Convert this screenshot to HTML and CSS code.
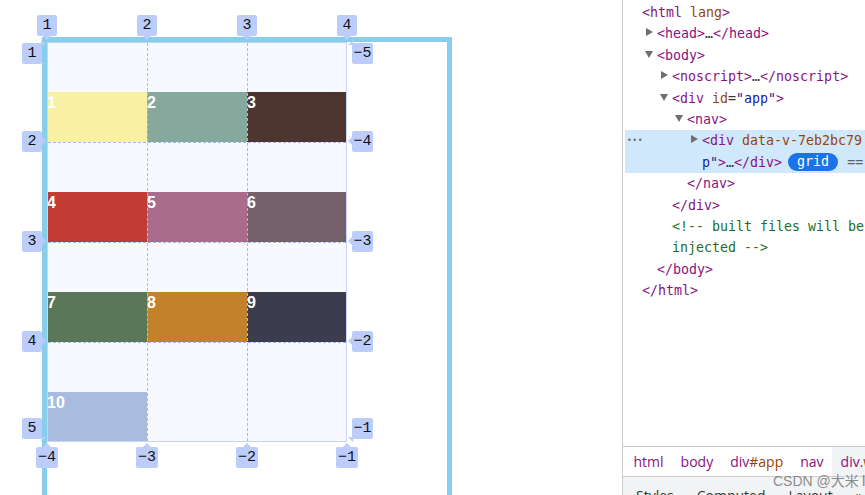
FILE: index.html
```html
<!DOCTYPE html>
<html lang="en">
<head>
<meta charset="utf-8">
<title>Grid</title>
<link rel="stylesheet" href="styles.css">
</head>
<body>
<main class="preview">
  <div class="frame">
    <div class="grid">
      <div class="item" style="background:#f8f1a3">1</div>
      <div class="item" style="background:#87a89c">2</div>
      <div class="item" style="background:#4f352f">3</div>
      <div class="item" style="background:#c23b35">4</div>
      <div class="item" style="background:#aa6c8c">5</div>
      <div class="item" style="background:#74616a">6</div>
      <div class="item" style="background:#5a7858">7</div>
      <div class="item" style="background:#c4812b">8</div>
      <div class="item" style="background:#3b3d4f">9</div>
      <div class="item" style="background:#a8bce0">10</div>

      <div class="overlay">
        <div class="vline v1"></div>
        <div class="vline v2"></div>
        <div class="hline h1"></div>
        <div class="hline h2"></div>
        <div class="hline h3"></div>

        <span class="lbl top down c1">1</span>
        <span class="lbl top down c2">2</span>
        <span class="lbl top down c3">3</span>
        <span class="lbl top down c4">4</span>

        <span class="lbl left rt r1">1</span>
        <span class="lbl left ra r2">2</span>
        <span class="lbl left ra r3">3</span>
        <span class="lbl left ra r4">4</span>
        <span class="lbl left rb r5">5</span>

        <span class="lbl right lt r1">−5</span>
        <span class="lbl right la r2">−4</span>
        <span class="lbl right la r3">−3</span>
        <span class="lbl right la r4">−2</span>
        <span class="lbl right lb r5">−1</span>

        <span class="lbl bottom up c1">−4</span>
        <span class="lbl bottom up c2">−3</span>
        <span class="lbl bottom up c3">−2</span>
        <span class="lbl bottom up c4">−1</span>
      </div>
    </div>
  </div>
</main>

<aside class="devtools">
  <div class="tree">
    <div class="line l0"><span class="t">&lt;html</span> <span class="a">lang</span><span class="t">&gt;</span></div>
    <div class="line l1"><span class="tri closed"></span><span class="t">&lt;head&gt;</span>…<span class="t">&lt;/head&gt;</span></div>
    <div class="line l1"><span class="tri open"></span><span class="t">&lt;body&gt;</span></div>
    <div class="line l2"><span class="tri closed"></span><span class="t">&lt;noscript&gt;</span>…<span class="t">&lt;/noscript&gt;</span></div>
    <div class="line l2"><span class="tri open"></span><span class="t">&lt;div</span> <span class="a">id</span>=<span class="v">"app"</span><span class="t">&gt;</span></div>
    <div class="line l3"><span class="tri open"></span><span class="t">&lt;nav&gt;</span></div>
    <div class="sel">
      <div class="line"><span class="dots">•••</span><span class="tri closed"></span><span class="t">&lt;div</span> <span class="a">data-v-7eb2bc79</span> <span class="a">class</span>=<span class="v">"wrap"</span></div>
      <div class="line"><span class="dots"></span><span class="v">p"</span><span class="t">&gt;</span>…<span class="t">&lt;/div&gt;</span><span class="badge">grid</span><span class="eq">== $0</span></div>
    </div>
    <div class="line l3"><span class="t">&lt;/nav&gt;</span></div>
    <div class="line l2"><span class="t">&lt;/div&gt;</span></div>
    <div class="line l2 c">&lt;!-- built files will be auto</div>
    <div class="line l2 c">injected --&gt;</div>
    <div class="line l1"><span class="t">&lt;/body&gt;</span></div>
    <div class="line l0"><span class="t">&lt;/html&gt;</span></div>
  </div>

  <nav class="crumbs">
    <span class="crumb"><span class="t">html</span></span>
    <span class="crumb"><span class="t">body</span></span>
    <span class="crumb"><span class="t">div</span><span class="a">#app</span></span>
    <span class="crumb"><span class="t">nav</span></span>
    <span class="crumb current"><span class="t">div</span><span class="a">.wrap</span></span>
  </nav>

  <div class="tabs">
    <span class="tab first">Styles</span>
    <span class="tab">Computed</span>
    <span class="tab">Layout</span>
    <span class="tab">»</span>
  </div>

  <span class="watermark">CSDN @大米Ⅱ</span>
</aside>
</body>
</html>
```

FILE: styles.css
```css
html, body {
  margin: 0;
  height: 495px;
  overflow: hidden;
  background: #fff;
}

body {
  display: flex;
  font-family: "Liberation Sans", Arial, sans-serif;
}

/* ---------- left preview ---------- */
.preview {
  width: 622px;
  flex: none;
  padding: 37px 0 0 42px;
  box-sizing: border-box;
}

.frame {
  width: 400px;
  height: 453px;
  border: 5px solid #87ceeb;
  border-bottom: 0;
}

.grid {
  position: relative;
  display: grid;
  grid-template-columns: repeat(3, 100px);
  grid-template-rows: repeat(4, 100px);
  width: 300px;
  height: 400px;
  background: #f8f9ff;
}

.item {
  align-self: end;
  height: 50px;
  box-sizing: border-box;
  padding-top: 2px;
  color: #fff;
  font: bold 16px "Liberation Sans", Arial, sans-serif;
  line-height: 18px;
}

.overlay {
  position: absolute;
  inset: 0;
  border: 1px solid #c6d4fa;
  pointer-events: none;
}

.vline {
  position: absolute;
  top: 0;
  bottom: 0;
  border-left: 1px dashed #a3baf3;
}
.v1 { left: 99px; }
.v2 { left: 199px; }

.hline {
  position: absolute;
  left: 0;
  right: 0;
  border-top: 1px dashed #a3baf3;
}
.h1 { top: 99px; }
.h2 { top: 199px; }
.h3 { top: 299px; }

/* labels */
.lbl {
  position: absolute;
  height: 21px;
  width: 20px;
  box-sizing: border-box;
  background: #bccdfc;
  border-radius: 2px;
  color: #111;
  font: 15px "Liberation Mono", "DejaVu Sans Mono", monospace;
  line-height: 21px;
  text-align: center;
}

.lbl::after {
  content: "";
  position: absolute;
  width: 0;
  height: 0;
}

.top { top: -28px; }
.top.c1 { left: -11px; }
.top.c2 { left: 89px; }
.top.c3 { left: 189px; }
.top.c4 { left: 289px; }

.bottom { top: 404px; width: 22px; }
.bottom.c1 { left: -12px; }
.bottom.c2 { left: 88px; }
.bottom.c3 { left: 188px; }
.bottom.c4 { left: 288px; }

.left { left: -26px; }
.right { left: 304px; width: 21px; }
.r1 { top: 0; }
.r2 { top: 88px; }
.r3 { top: 188px; }
.r4 { top: 288px; }
.r5 { top: 375px; }

/* arrows */
.down::after {
  left: 6px;
  bottom: -4px;
  border-top: 4px solid #bccdfc;
  border-left: 4px solid transparent;
  border-right: 4px solid transparent;
}
.up::after {
  left: 7px;
  top: -4px;
  border-bottom: 4px solid #bccdfc;
  border-left: 4px solid transparent;
  border-right: 4px solid transparent;
}
.ra::after {
  right: -4px;
  top: 6px;
  border-left: 4px solid #bccdfc;
  border-top: 4px solid transparent;
  border-bottom: 4px solid transparent;
}
.la::after {
  left: -4px;
  top: 6px;
  border-right: 4px solid #bccdfc;
  border-top: 4px solid transparent;
  border-bottom: 4px solid transparent;
}
.rt::after {
  right: -4px;
  top: -3px;
  border-left: 5px solid #bccdfc;
  border-top: 5px solid transparent;
}
.rb::after {
  right: -4px;
  bottom: -3px;
  border-left: 5px solid #bccdfc;
  border-bottom: 5px solid transparent;
}
.lt::after {
  left: -4px;
  top: -3px;
  border-right: 5px solid #bccdfc;
  border-top: 5px solid transparent;
}
.lb::after {
  left: -4px;
  bottom: -3px;
  border-right: 5px solid #bccdfc;
  border-bottom: 5px solid transparent;
}

/* ---------- devtools ---------- */
.devtools {
  position: relative;
  flex: 1;
  min-width: 0;
  display: flex;
  flex-direction: column;
  border-left: 1px solid #cbcdd1;
  overflow: hidden;
}

.tree {
  height: 446px;
  flex: none;
  box-sizing: border-box;
  padding-top: 2px;
  font: 13.3px "DejaVu Sans Mono", "Liberation Mono", monospace;
  line-height: 21.4px;
  color: #303942;
}

.line {
  white-space: nowrap;
  overflow: hidden;
}
.l0 { padding-left: 19px; }
.l1 { padding-left: 34px; }
.l2 { padding-left: 49px; }
.l3 { padding-left: 64px; }

.t { color: #881280; }
.a { color: #994500; }
.v { color: #1a1aa6; }
.c { color: #236e25; }

.tri {
  display: inline-block;
  width: 11px;
  margin-left: -11px;
  height: 10px;
  position: relative;
}
.tri::before {
  content: "";
  position: absolute;
  width: 0;
  height: 0;
}
.tri.closed::before {
  left: 0;
  top: 0;
  border-left: 7px solid #6e6e6e;
  border-top: 4.5px solid transparent;
  border-bottom: 4.5px solid transparent;
}
.tri.open::before {
  left: -1px;
  top: 1px;
  border-top: 7px solid #6e6e6e;
  border-left: 4.5px solid transparent;
  border-right: 4.5px solid transparent;
}

.sel {
  margin-left: 2px;
  background: #cfe8fc;
}
.sel .line { padding-left: 2px; }

.dots {
  display: inline-block;
  width: 75px;
  color: #6b6b6b;
  font-size: 8px;
  letter-spacing: 0.5px;
  vertical-align: top;
}

.badge {
  display: inline-block;
  margin-left: 6px;
  padding: 0 9px;
  height: 18px;
  line-height: 18px;
  border-radius: 9px;
  background: #1a73e8;
  color: #fff;
  vertical-align: 1px;
}

.eq {
  margin-left: 9px;
  color: #5f6368;
}

.crumbs {
  height: 29px;
  flex: none;
  display: flex;
  border-top: 1px solid #cacdd1;
  border-bottom: 1px solid #cacdd1;
  padding-left: 2px;
  font: 14px "Open Sans", "Liberation Sans", sans-serif;
  line-height: 29px;
  white-space: nowrap;
}
.crumb { padding: 0 8.5px; }
.crumb.current { background: #f1f3f4; }

.tabs {
  flex: 1;
  display: flex;
  background: #f1f3f4;
  padding: 9px 0 0 3px;
  font: 14px "Open Sans", "Liberation Sans", sans-serif;
  color: #333;
  white-space: nowrap;
}
.tab { padding: 0 10px; }
.tab + .tab { margin-left: 3px; }

.watermark {
  position: absolute;
  left: 150px;
  top: 470px;
  font: 14px "Liberation Sans", "Noto Sans CJK SC", sans-serif;
  color: rgba(120, 120, 120, 0.85);
  white-space: nowrap;
}
```
